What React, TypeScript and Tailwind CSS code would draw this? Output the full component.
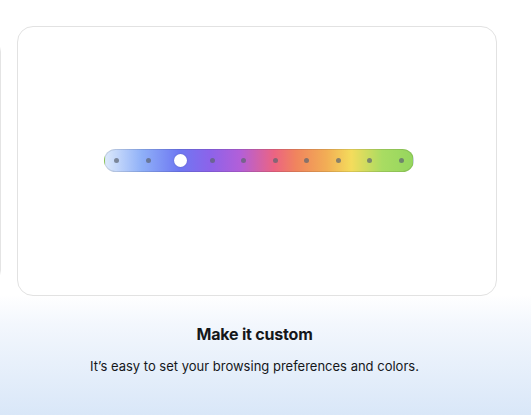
const dots = [0, 1, 2, 3, 4, 5, 6, 7, 8, 9];

function ColorSlider({ active }: { active: number }) {
  return (
    <div className="relative h-[23px] w-[310px] rounded-full border border-black/10 bg-[linear-gradient(90deg,#dce9fb_0%,#8fb0f8_12%,#6e78f2_24%,#8c63ea_34%,#b35fd8_44%,#ec6482_55%,#f0845e_62%,#f2ae55_72%,#f4dc5c_80%,#a9dc62_90%,#95d65e_100%)]">
      <div className="flex h-full items-center justify-between px-[9px]">
        {dots.map((d) =>
          d === active ? (
            <span key={d} className="flex h-[6px] w-[6px] items-center justify-center">
              <span className="h-[13px] w-[13px] shrink-0 rounded-full bg-white shadow-[0_0_2px_rgba(0,0,0,0.2)]" />
            </span>
          ) : (
            <span key={d} className="h-[5px] w-[5px] rounded-full bg-[#5b6470]/70" />
          )
        )}
      </div>
    </div>
  );
}

export default function App() {
  return (
    <div
      className="h-[415px] w-[531px] overflow-hidden bg-[linear-gradient(180deg,#ffffff_0%,#ffffff_71%,#f3f7fd_78%,#d9e7f8_100%)]"
      style={{ fontFamily: 'Inter, "Noto Sans", sans-serif' }}
    >
      <div className="flex items-center gap-[16px] pt-[26px]">
        <div className="-ml-[481px] h-[250px] w-[482px] shrink-0 rounded-2xl border border-[#e4e4e4] bg-white" />
        <div className="flex h-[270px] w-[480px] shrink-0 items-center justify-center rounded-2xl border border-[#e2e2e2] bg-white">
          <div className="-mt-[2px] ml-[4px]">
            <ColorSlider active={2} />
          </div>
        </div>
      </div>
      <div className="flex flex-col items-center pr-[22px] pt-[27px] text-[#15171a]">
        <h2 className="text-[16px] font-bold leading-[22px] tracking-[-0.2px]">Make it custom</h2>
        <p className="mt-[12px] text-[13px] leading-[18px]">It’s easy to set your browsing preferences and colors.</p>
      </div>
    </div>
  );
}
